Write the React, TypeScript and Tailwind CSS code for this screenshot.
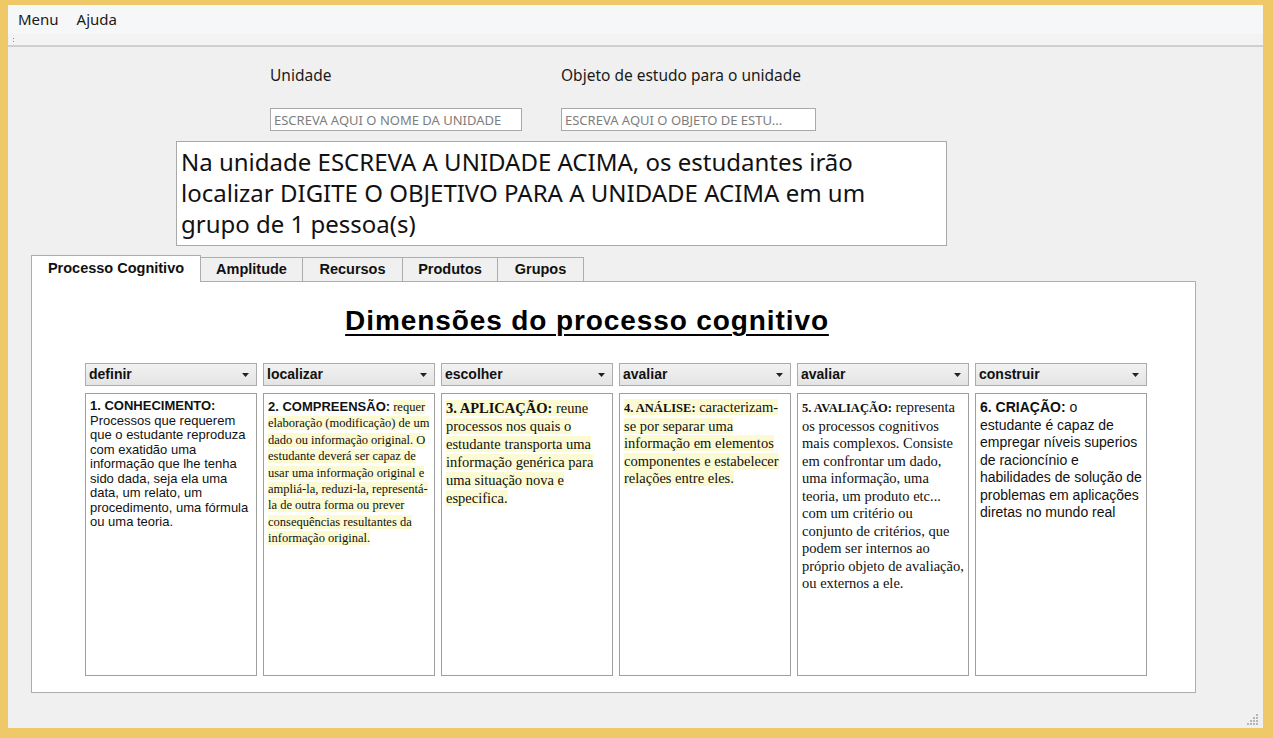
import { useState } from "react";

const ui = { fontFamily: '"Noto Sans", "Open Sans", sans-serif' };
const tahoma = { fontFamily: '"Liberation Sans", Arial, sans-serif' };
const serif = { fontFamily: '"Liberation Serif", "Times New Roman", serif' };

const tabs = [
    { label: "Processo Cognitivo", w: "w-[170px]" },
    { label: "Amplitude", w: "w-[102px]" },
    { label: "Recursos", w: "w-[100px]" },
    { label: "Produtos", w: "w-[95px]" },
    { label: "Grupos", w: "w-[86px]" },
];

const combos = ["definir", "localizar", "escolher", "avaliar", "avaliar", "construir"];

const Hl = ({ children }: { children: React.ReactNode }) => (
    <span className="bg-[#fcfad2]">{children}</span>
);

const Combo = ({ label }: { label: string }) => (
    <div
        className="flex h-[23px] items-center justify-between border border-[#acacac] bg-gradient-to-b from-[#f2f2f2] to-[#e4e4e4] pl-[3px] pr-[7px] text-[14px] font-bold text-[#111]"
        style={tahoma}
    >
        <span>{label}</span>
        <svg width="7" height="4" viewBox="0 0 7 4">
            <path d="M0 0 H7 L3.5 4 Z" fill="#222" />
        </svg>
    </div>
);

const Card = ({ children }: { children: React.ReactNode }) => (
    <div className="h-[283px] border border-[#9f9f9f] bg-white px-[4px] pt-[5px] text-[#111]">
        {children}
    </div>
);

const GripDots = () => (
    <svg width="14" height="12" viewBox="0 0 14 12">
        {[
            [11, 1], [8, 4], [11, 4], [5, 7], [8, 7], [11, 7], [2, 10], [5, 10], [8, 10], [11, 10],
        ].map(([x, y], i) => (
            <rect key={i} x={x} y={y} width="2" height="2" fill="#b5b5b5" />
        ))}
    </svg>
);

const App = () => {
    const [active, setActive] = useState(0);

    return (
        <div className="flex h-[738px] w-[1273px] flex-col bg-[#efc867] pb-[10px] pl-[8px] pr-[10px] pt-[5px]" style={ui}>
            <div className="flex flex-1 flex-col bg-[#f0f0f0]">
                {/*Menu bar*/}
                <div className="flex h-[29px] items-center gap-[18px] bg-[#f6f7f8] pl-[10px] text-[15px] text-[#1a1a1a]">
                    <span>Menu</span>
                    <span>Ajuda</span>
                </div>

                {/*Toolbar strip*/}
                <div className="flex h-[13px] flex-col justify-center gap-[2px] border-b-2 border-[#cfcfcf] bg-[#f3f3f3] pl-[5px]">
                    <span className="h-[1px] w-[1px] bg-[#888]" />
                    <span className="h-[1px] w-[1px] bg-[#888]" />
                </div>

                {/*Header fields*/}
                <div className="ml-[262px] mt-[17px] flex text-[15.5px] text-[#1a1a1a]">
                    <div className="w-[291px]">
                        <div className="h-[24px]">Unidade</div>
                        <input
                            placeholder="ESCREVA AQUI O NOME DA UNIDADE"
                            className="mt-[20px] h-[23px] w-[252px] border border-[#a9a9a9] bg-white px-[3px] text-[13px] outline-none placeholder:text-[#7d7d7d]"
                            style={ui}
                        />
                    </div>
                    <div>
                        <div className="h-[24px]">Objeto de estudo para o unidade</div>
                        <input
                            placeholder="ESCREVA AQUI O OBJETO DE ESTU..."
                            className="mt-[20px] h-[23px] w-[255px] border border-[#a9a9a9] bg-white px-[3px] text-[13px] outline-none placeholder:text-[#7d7d7d]"
                            style={ui}
                        />
                    </div>
                </div>

                {/*Summary text*/}
                <div className="ml-[168px] mt-[10px] h-[105px] w-[771px] border border-[#a9a9a9] bg-white pl-[4px] pr-[40px] pt-[4px] text-[24px] leading-[31px] text-[#111]">
                    Na unidade ESCREVA A UNIDADE ACIMA, os estudantes irão localizar DIGITE O OBJETIVO PARA A UNIDADE ACIMA em um grupo de 1 pessoa(s)
                </div>

                {/*Tabs*/}
                <div className="ml-[23px] mt-[9px] flex items-end">
                    {tabs.map((t, i) => (
                        <button
                            key={t.label}
                            onClick={() => setActive(i)}
                            className={
                                i === active
                                    ? `relative z-10 -mb-[1px] h-[27px] ${t.w} border border-b-0 border-[#adadad] bg-white text-[14.5px] font-bold text-[#111]`
                                    : `h-[24px] ${t.w} border border-b-0 border-l-0 border-[#adadad] bg-[#f0f0f0] text-[14.5px] font-bold text-[#111]`
                            }
                            style={tahoma}
                        >
                            {t.label}
                        </button>
                    ))}
                </div>

                {/*Tab pane*/}
                <div className="ml-[23px] h-[412px] w-[1165px] border border-[#adadad] bg-white">
                    <h1
                        className="mt-[21px] w-[1110px] text-center text-[28px] font-bold leading-[36px] tracking-[0.9px] text-black underline decoration-2 underline-offset-[4px]"
                        style={tahoma}
                    >
                        Dimensões do processo cognitivo
                    </h1>

                    <div className="ml-[53px] mt-[24px] grid grid-cols-[repeat(6,172px)] gap-x-[6px] gap-y-[7px]">
                        {combos.map((c, i) => (
                            <Combo key={i} label={c} />
                        ))}

                        <Card>
                            <div className="text-[13px] leading-[14.5px]" style={tahoma}>
                                <b>1. CONHECIMENTO:</b>
                                <br />
                                Processos que requerem que o estudante reproduza com exatidão uma informação que lhe tenha sido dada, seja ela uma data, um relato, um procedimento, uma fórmula ou uma teoria.
                            </div>
                        </Card>

                        <Card>
                            <div className="text-[12.5px] leading-[16.4px]" style={serif}>
                                <b className="text-[13px]" style={tahoma}>2. COMPREENSÃO:</b>{" "}
                                <Hl>
                                    requer elaboração (modificação) de um dado ou informação original. O estudante deverá ser capaz de usar uma informação original e ampliá-la, reduzi-la, representá-la de outra forma ou prever consequências resultantes da informação original.
                                </Hl>
                            </div>
                        </Card>

                        <Card>
                            <div className="text-[14.5px] leading-[18px]" style={serif}>
                                <Hl>
                                    <b>3. APLICAÇÃO:</b> reune processos nos quais o estudante transporta uma informação genérica para uma situação nova e especifica.
                                </Hl>
                            </div>
                        </Card>

                        <Card>
                            <div className="text-[14.5px] leading-[17.5px]" style={serif}>
                                <Hl>
                                    <b className="text-[12.5px]">4. ANÁLISE:</b> caracterizam-se por separar uma informação em elementos componentes e estabelecer relações entre eles.
                                </Hl>
                            </div>
                        </Card>

                        <Card>
                            <div className="text-[14.5px] leading-[17.5px]" style={serif}>
                                <b className="text-[12.5px]">5. AVALIAÇÃO:</b> representa os processos cognitivos mais complexos. Consiste em confrontar um dado, uma informação, uma teoria, um produto etc... com um critério ou conjunto de critérios, que podem ser internos ao próprio objeto de avaliação, ou externos a ele.
                            </div>
                        </Card>

                        <Card>
                            <div className="text-[14px] leading-[17.5px]" style={tahoma}>
                                <b>6. CRIAÇÃO:</b> o estudante é capaz de empregar níveis superios de racioncínio e habilidades de solução de problemas em aplicações diretas no mundo real
                            </div>
                        </Card>
                    </div>
                </div>

                {/*Resize grip*/}
                <div className="mt-auto flex justify-end pb-[3px] pr-[4px]">
                    <GripDots />
                </div>
            </div>
        </div>
    );
};

export default App;
